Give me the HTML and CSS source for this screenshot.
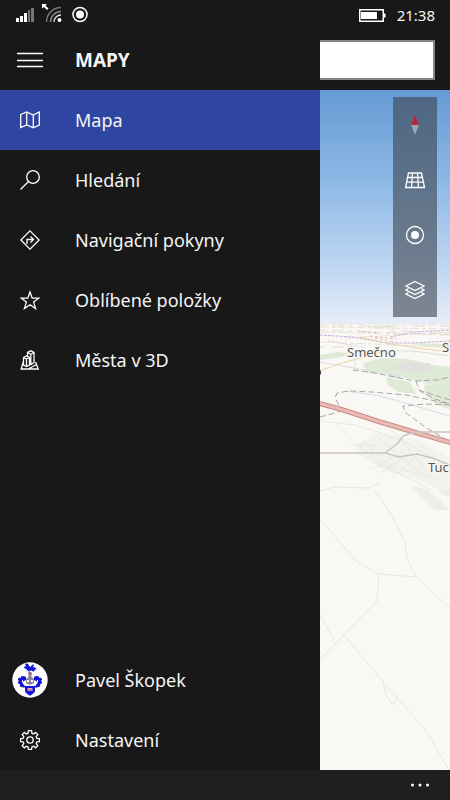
FILE: index.html
```html
<!DOCTYPE html>
<html lang="cs">
<head>
  <meta charset="UTF-8">
  <meta name="viewport" content="width=device-width, initial-scale=1.0">
  <title>Mapy</title>
  <link rel="stylesheet" href="styles.css">
</head>
<body>
<div class="status-bar">
  <svg class="status-signal" width="72" height="22" viewBox="0 0 72 22">
    <g fill="#fff">
      <path d="M0 14h3v4H0zM4 12h3v6H4zM8 9h3v9H8z"/>
      <path fill="#777" d="M12 6h2v12h-2zM15 4h3v14h-3z"/>
      <path d="M26 0h5l-1.500 1.500 3 3-1.500 1.500-3-3L26 4.500z"/>
      <circle cx="43.500" cy="16" r="2"/>
    </g>
    <g fill="none" stroke-width="1.400">
      <path stroke="#ddd" d="M38 18a7 7 0 0 1 7-7"/>
      <path stroke="#888" d="M34.500 18A10.500 10.500 0 0 1 45 7.500"/>
      <path stroke="#777" d="M30.500 18A14.500 14.500 0 0 1 45 3.500"/>
      <circle cx="64" cy="10.500" r="7" stroke="#fff" stroke-width="1.500"/>
    </g>
    <circle cx="64" cy="10.500" r="4" fill="#fff"/>
  </svg>
  <svg class="status-battery" width="27" height="13" viewBox="0 0 27 13">
    <rect x=".75" y=".75" width="23.500" height="11.500" fill="none" stroke="#fff" stroke-width="1.500"/>
    <path fill="#fff" d="M2 3h16v7H2zM25 4.500h1.500v4H25z"/>
  </svg>
  <span class="clock">21:38</span>
</div>

<header class="top-bar">
  <div class="menu-header">
    <button class="icon-button" type="button" aria-label="Nabídka">
      <svg width="26" height="16" viewBox="0 0 26 16" fill="none" stroke="#fff" stroke-width="1.500">
        <path d="M0 1.500h26M0 8.500h26M0 14.500h26"/>
      </svg>
    </button>
    <h1>MAPY</h1>
  </div>
  <input class="search" type="text" aria-label="Hledat">
</header>

<main>
  <nav class="menu">
    <div class="menu-group">
      <a class="menu-item active" href="#">
        <span class="menu-icon">
          <svg class="icon" viewBox="0 0 20 20">
            <path d="M.7 4.500 6.700 2l6.600 3 6-3v13l-6 2.800-6.600-2.800-6 2.500zM6.700 2v13M13.300 5v12.800"/>
          </svg>
        </span>
        Mapa
      </a>
      <a class="menu-item" href="#">
        <span class="menu-icon">
          <svg class="icon" viewBox="0 0 20 20">
            <circle cx="13" cy="7" r="6.300"/>
            <path d="M8.500 11.500.5 19.500"/>
          </svg>
        </span>
        Hledání
      </a>
      <a class="menu-item" href="#">
        <span class="menu-icon">
          <svg class="icon" viewBox="0 0 20 20">
            <path d="M10 .9 19.100 10 10 19.100.9 10zM7 14V9.500h6.300M10.500 6.500l3 3-3 3"/>
          </svg>
        </span>
        Navigační pokyny
      </a>
      <a class="menu-item" href="#">
        <span class="menu-icon">
          <svg class="icon" viewBox="0 0 20 20">
            <path d="m10 2 2.200 6.200h6.600l-5.200 3.900 2 6.500L10 14.700l-5.600 3.900 2-6.500-5.200-3.900h6.600z"/>
          </svg>
        </span>
        Oblíbené položky
      </a>
      <a class="menu-item" href="#">
        <span class="menu-icon">
          <svg class="icon" viewBox="0 0 20 20">
            <path d="M3.500 11 1.200 19h17l-2.600-7M3.500 7.500 6.500 6l3 1.500v7.500l-3 1.500-3-1.500zM3.500 7.500l3 1.500 3-1.500M6.500 9v7.500M7.500 6V2.500l3.300-1.700L14 2.500v10l-3 2-1.500-.5M7.500 2.500 10.800 4.300 14 2.500M10.800 4.300v10M9 18.500l7.500-4"/>
          </svg>
        </span>
        Města v 3D
      </a>
    </div>
    <div class="menu-group">
      <a class="menu-item" href="#">
        <span class="menu-icon">
          <svg class="avatar" viewBox="0 0 36 36">
            <circle cx="18" cy="18" r="17.700" fill="#fff"/>
            <g fill="#1616d8">
              <path d="M17 10c-1-2-2-2-3-1l1-2c-2 0-3-1-3-2l2-1-1-2c2-1 4 0 4 2l2 1c0-2 2-3 3-2l-1 2c2 0 3 1 4 3l-2-1c0 2-1 3-3 2-2-1-2 0-3 1z"/>
              <path d="M14 15c-3-2-6-1-5 1-3-1-4 2-2 3-2 1-1 3 1 3-1 2 1 4 3 3 0 1 2 1 3-1-2 0-3-1-2-2-2 0-2-2 0-3l2-1z"/>
              <path d="M22 15c3-2 6-1 5 1 3-1 4 2 2 3 2 1 1 3-1 3 1 2-1 4-3 3 0 1-2 1-3-1 2 0 3-1 2-2 2 0 2-2 0-3l-2-1z"/>
              <path d="M13 24h10v5c0 2-3 3-5 5-2-2-5-3-5-5z"/>
            </g>
            <path fill="#8b8198" d="M16.500 10h3v5l2.500 2v4l-4 2-4-2v-4l2.500-2z"/>
            <path fill="#fff" d="M15 18h2v2h-2zM19 18h2v2h-2zM10 18h1v2h-1zM25 18h1v2h-1z"/>
            <path fill="#d9a6bb" d="M15.500 26h5v3h-5z"/>
            <path fill="none" stroke="#c33" stroke-width=".6" d="M16 11.500h4M16 28h4"/>
          </svg>
        </span>
        Pavel Škopek
      </a>
      <a class="menu-item" href="#">
        <span class="menu-icon">
          <svg class="icon" viewBox="0 0 20 20">
            <path d="M8.100 3.200 8.400.7h3.200l.3 2.500 1.700.8 2-1.600 2.200 2.200-1.600 2 .7 1.700 2.500.3v3l-2.500.3-.7 1.700 1.600 2-2.200 2.200-2-1.600-1.700.7-.3 2.500H8.400l-.3-2.500-1.700-.7-2 1.600-2.200-2.200 1.600-2-.7-1.700-2.500-.3v-3l2.500-.3.7-1.700-1.600-2 2.200-2.200 2 1.600z"/>
            <circle cx="10" cy="10" r="3.200"/>
          </svg>
        </span>
        Nastavení
      </a>
    </div>
  </nav>

  <section class="map">
    <svg class="map-drawing" viewBox="320 90 130 680" preserveAspectRatio="xMinYMin slice">
      <defs>
        <linearGradient id="sky" x1="0" y1="0" x2="0" y2="1">
          <stop offset="0" stop-color="#659ad3"/>
          <stop offset=".4" stop-color="#8fb9e6"/>
          <stop offset=".75" stop-color="#bdd6f2"/>
          <stop offset="1" stop-color="#e8eef8"/>
        </linearGradient>
      </defs>
      <rect x="320" y="90" width="130" height="680" fill="#f9f8f4"/>
      <rect x="320" y="90" width="130" height="234" fill="url(#sky)"/>

      <!-- fields and woods -->
      <g fill="#dfead6">
        <path d="M362 364l18-6 28 1 20 5 22 3v15l-22 2-16-5-22-5-22-1z"/>
        <path d="M386 377l24 5 6 12-18-2-10-7zM424 385l26-3v28l-14-6-11-10z"/>
        <path d="M320 355l18-3 12 1-8 4-22 3zM370 326l20-1 5 2-18 2zM410 343l40 1v4l-24-1z"/>
      </g>
      <path fill="#e0e1df" d="M392 367l12-5 25 1 5 5-12 4-22-1zM387 372l14 3-2 4-11-3z"/>
      <path fill="#f2f2ee" d="M354 446l22-12 42 6 32 18v38l-30-16-40-12z"/>
      <path fill="#eceeea" d="M410 485l25 25h15l-22-20zM436 490l14 8v-8z"/>
      <path fill="#f9f8f4" d="M376 496c2-22 14-28 23-20l22 22z"/>
      <g fill="none" stroke="#e7e8e4" stroke-width="1">
        <path d="M336 423l24 24 30 22 40 20M362 440l28 26 50 14M384 425l26 20 40 22M350 445h26M356 452l40 22M378 438l44 36M398 436l34 42M370 470l32-18M380 474l30-22M392 478l28-24"/>
      </g>

      <!-- horizon -->
      <g fill="none" stroke-width="1">
        <path stroke="#eae1dc" stroke-dasharray="9 3 4 2" d="M320 324h130M320 327l130 2M320 332l130 3M320 342l130 5M345 338l105-6"/>
        <path stroke="#dde2d7" stroke-dasharray="5 7 12 3" d="M320 326h130M320 330l130 5M320 347h45M390 330l60 4"/>
        <path stroke="#e5bfab" stroke-dasharray="3 2" d="M358 331l20 2M370 336l26 3M375 338l20 4"/>
        <path stroke="#c9b2d7" stroke-dasharray="3 1" d="M320 335l32 2 36 6 24 0 38-2M390 337l25-5 35-2"/>
        <path stroke="#edd5a8" d="M320 371l18-7 27-7 10-5M360 337l30 7 35 5 25 3"/>
        <path stroke="#dfdcd7" d="M320 362l28 5 28 5M355 350v20M328 341l30 5M365 357l18-6 30 0 37 5"/>
      </g>

      <!-- railways and streams -->
      <g fill="none">
        <path stroke="#d5dfe7" d="M346 391l34 5 25 7 45 13"/>
        <path stroke="#aaa8a7" stroke-width="1" stroke-dasharray="6 3" d="M353 370l22 3 30 6 10 2 22-1 13-3M416 381l4 10 15 8 15 5M320 417l19-5 1-5-5-9 2-5 12-2 23 1 34 3 20 4 23 5M450 400l-35-11M450 405l-25-1-22 2 2 6 20 15 25 15"/>
      </g>

      <!-- roads -->
      <path fill="none" stroke="#c98d88" stroke-width="5" d="M318 403l22 6 37 12 40 12 35 10"/>
      <path fill="none" stroke="#ebb9b3" stroke-width="3" d="M318 403l22 6 37 12 40 12 35 10"/>
      <path fill="none" stroke="#cbc6bc" stroke-width="1.500" d="M320 453h65l14 4 18-3 15 4 18 7M385 453l13-10 5-7 12-4h35"/>
      <g fill="none" stroke="#e7e6e1" stroke-width="1">
        <path d="M320 491l14-4 36 1 10-6M320 421l35 4 20 6 22 8"/>
        <path d="M320 519l37 43 22 12 37 3 34 31M375 490l17 26 13 27 2 16 9 18M379 574l-2 27-34 35-23 24M320 614l16 31M343 634l42 50 37 42 10 14 18 32M383 681l3 15 7 9 4-9"/>
      </g>

      <g class="map-label">
        <text x="347" y="357">Smečno</text>
        <text x="442" y="352">S</text>
        <text x="428" y="472">Tuc</text>
      </g>
      <path fill="#444" d="M320 370l1 1v3l-1 1z"/>
    </svg>

    <div class="map-tools">
      <button class="tool" type="button" aria-label="Sever">
        <svg width="20" height="20" viewBox="0 0 20 20">
          <path fill="#b92538" d="M10 0l4 10H6z"/>
          <path fill="#9aa5b1" d="M6 10h8l-4 10z"/>
        </svg>
      </button>
      <button class="tool" type="button" aria-label="Naklonit">
        <svg class="icon" viewBox="0 0 20 20">
          <path d="M3.500 3h13l3 14.500H.5zM2.500 7.500h15M1.500 12.200h17M7.500 3 6.500 17.500M12.500 3l1 14.500"/>
        </svg>
      </button>
      <button class="tool" type="button" aria-label="Moje poloha">
        <svg class="icon" viewBox="0 0 20 20">
          <circle cx="10" cy="10" r="8.500"/>
          <circle cx="10" cy="10" r="4" fill="#fff" stroke="none"/>
        </svg>
      </button>
      <button class="tool" type="button" aria-label="Vrstvy">
        <svg class="icon" viewBox="0 0 20 20">
          <path d="M10 1.500l9 4.500-9 4.500L1 6zM3.500 8.500 1 10l9 4.500 9-4.500-2.500-1.500M3.500 12.500 1 14l9 4.500 9-4.500-2.500-1.500"/>
        </svg>
      </button>
    </div>
  </section>
</main>

<footer class="app-bar">
  <button class="more" type="button" aria-label="Další">
    <svg width="18" height="4" viewBox="0 0 18 4" fill="#fff">
      <circle cx="1.500" cy="2" r="1.500"/>
      <circle cx="9" cy="2" r="1.500"/>
      <circle cx="16.500" cy="2" r="1.500"/>
    </svg>
  </button>
</footer>
</body>
</html>
```

FILE: styles.css
```css
* {
  box-sizing: border-box;
}
body {
  display: flex;
  flex-direction: column;
  min-height: 100vh;
  margin: 0;
  background-color: #181818;
  color: #f5f5f5;
  font-family: "Noto Sans", "Open Sans", sans-serif;
  font-size: 18px;
}
button {
  display: flex;
  align-items: center;
  justify-content: center;
  padding: 0;
  border: none;
  background: none;
  cursor: pointer;
}
svg {
  display: block;
}
.status-bar {
  display: flex;
  align-items: center;
  height: 30px;
  padding: 0 15px 0 16px;
}
.status-signal {
  margin-right: auto;
}
.clock {
  margin-left: 11px;
  font-size: 15px;
  line-height: 30px;
}
.top-bar {
  display: flex;
  align-items: center;
  height: 60px;
  padding-right: 15px;
}
.menu-header {
  display: flex;
  flex: none;
  align-items: center;
  width: 320px;
}
.icon-button {
  width: 60px;
  height: 60px;
}
.menu-header h1 {
  margin: 0;
  padding-left: 15px;
  font-size: 19px;
}
.search {
  flex: 1;
  min-width: 0;
  height: 40px;
  padding: 0 8px;
  border: 2px solid #858585;
  border-left: none;
  border-radius: 0;
  background-color: white;
  font: inherit;
}
main {
  display: flex;
  flex: 1;
}
.menu {
  display: flex;
  flex: none;
  flex-direction: column;
  justify-content: space-between;
  width: 320px;
}
.menu-item {
  display: flex;
  align-items: center;
  gap: 15px;
  height: 60px;
  color: inherit;
  text-decoration: none;
}
.menu-item.active {
  background-color: #2e45a2;
}
.menu-icon {
  display: flex;
  justify-content: center;
  width: 60px;
}
.icon {
  width: 20px;
  height: 20px;
  fill: none;
  stroke: #fff;
  stroke-width: 1.3;
}
.avatar {
  width: 36px;
  height: 36px;
}
.map {
  position: relative;
  flex: 1;
  min-width: 0;
  overflow: hidden;
  background-color: #f9f8f4;
}
/* mapa pod nástroji */
.map-drawing {
  position: absolute;
  width: 100%;
  height: 100%;
}
.map-label {
  fill: #555;
  stroke: #f9f8f4;
  stroke-width: 2px;
  paint-order: stroke;
  font-size: 13px;
}
.map-tools {
  position: absolute;
  top: 7px;
  right: 13px;
  background-color: rgba(60, 66, 76, 0.6);
}
.tool {
  width: 44px;
  height: 55px;
}
.app-bar {
  display: flex;
  justify-content: flex-end;
  height: 30px;
  background-color: #1f1f1f;
}
.more {
  width: 60px;
  height: 30px;
}
```
